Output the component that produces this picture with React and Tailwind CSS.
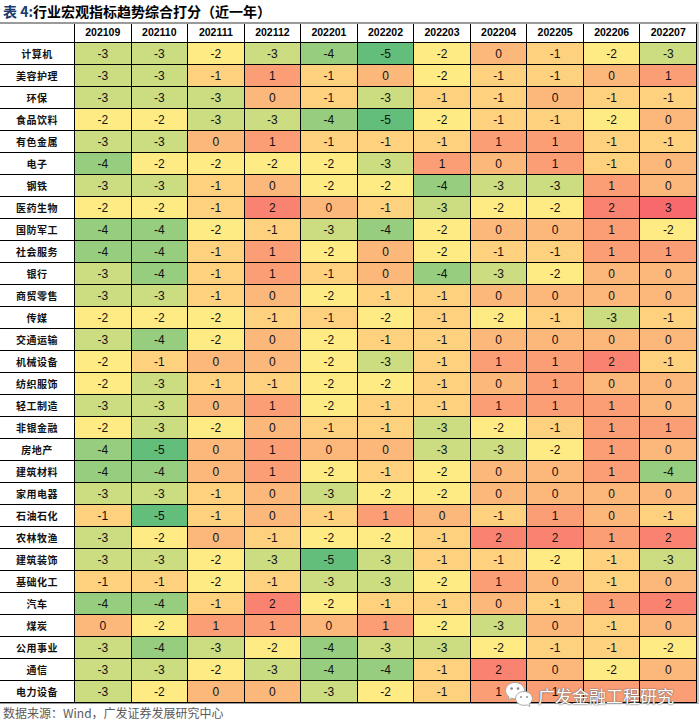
import React from "react";

const months = ["202109","202110","202111","202112","202201","202202","202203","202204","202205","202206","202207"];

const rows = [
  ["计算机", [-3,-3,-2,-3,-4,-5,-2,0,-1,-2,-3]],
  ["美容护理", [-3,-3,-1,1,-1,0,-2,-1,-1,0,1]],
  ["环保", [-3,-3,-3,0,-1,-3,-1,-1,0,-1,-1]],
  ["食品饮料", [-2,-2,-3,-3,-4,-5,-2,-1,-1,-2,0]],
  ["有色金属", [-3,-3,0,1,-1,-1,-1,1,1,-1,-1]],
  ["电子", [-4,-2,-2,-2,-2,-3,1,0,1,-1,0]],
  ["钢铁", [-3,-3,-1,0,-2,-2,-4,-3,-3,1,0]],
  ["医药生物", [-2,-2,-1,2,0,-1,-3,-2,-2,2,3]],
  ["国防军工", [-4,-4,-2,-1,-3,-4,-2,0,0,1,-2]],
  ["社会服务", [-4,-4,-1,1,-2,0,-2,-1,-1,1,1]],
  ["银行", [-3,-4,-1,1,-1,0,-4,-3,-2,0,0]],
  ["商贸零售", [-3,-3,-1,0,-2,-1,-1,0,0,0,0]],
  ["传媒", [-2,-2,-2,-1,-1,-2,-1,-2,-1,-3,-1]],
  ["交通运输", [-3,-4,-2,0,-2,-1,-1,0,0,0,0]],
  ["机械设备", [-2,-1,0,0,-2,-3,-1,1,1,2,-1]],
  ["纺织服饰", [-2,-3,-1,-1,-2,-2,-1,0,1,0,0]],
  ["轻工制造", [-3,-3,0,1,-2,-1,-1,1,1,1,0]],
  ["非银金融", [-2,-3,-2,0,-1,-1,-3,-2,-1,1,1]],
  ["房地产", [-4,-5,0,1,0,0,-3,-3,-2,1,0]],
  ["建筑材料", [-4,-4,0,1,-2,-1,-2,0,0,1,-4]],
  ["家用电器", [-3,-3,-1,0,-3,-2,-2,0,0,0,0]],
  ["石油石化", [-1,-5,-1,0,-1,1,0,-1,1,0,-1]],
  ["农林牧渔", [-3,-2,0,-1,-2,-2,-1,2,2,1,2]],
  ["建筑装饰", [-3,-3,-2,-3,-5,-3,-1,-1,-2,-1,-3]],
  ["基础化工", [-1,-1,-2,-1,-3,-3,-2,1,0,-1,0]],
  ["汽车", [-4,-4,-1,2,-2,-1,-1,0,-1,1,2]],
  ["煤炭", [0,-2,1,1,0,1,-2,-3,0,-1,0]],
  ["公用事业", [-3,-4,-3,-2,-4,-3,-3,-2,-1,-1,-2]],
  ["通信", [-3,-3,-2,-3,-4,-4,-1,2,0,-2,0]],
  ["电力设备", [-3,-2,0,0,-3,-2,-1,1,1,1,1]],
];

const bg = {
  "-5": "bg-[#63BE7B]",
  "-4": "bg-[#97CD7E]",
  "-3": "bg-[#CBDC81]",
  "-2": "bg-[#FFEB84]",
  "-1": "bg-[#FED17F]",
  "0": "bg-[#FCB77A]",
  "1": "bg-[#FB9D75]",
  "2": "bg-[#F98370]",
  "3": "bg-[#F8696B]",
};

const gridCols = "grid grid-cols-[75px_repeat(11,minmax(0,1fr))]";

function WeChatIcon() {
  return (
    <svg width="30" height="27" viewBox="0 0 30 27">
      <g stroke="#a8a8a8" strokeWidth="1" fill="#ffffff">
        <path d="M11 1.5 C5.5 1.5 1.5 5.2 1.5 9.6 C1.5 12.2 2.8 14.3 5 15.8 L4 19 L7.6 17.1 C8.7 17.5 9.8 17.7 11 17.7 C16.5 17.7 20.5 14 20.5 9.6 C20.5 5.2 16.5 1.5 11 1.5 Z" />
        <path d="M20 10.5 C15.3 10.5 11.6 13.6 11.6 17.4 C11.6 21.2 15.3 24.3 20 24.3 C21 24.3 21.9 24.1 22.8 23.8 L26 25.5 L25.2 22.7 C27.1 21.4 28.4 19.5 28.4 17.4 C28.4 13.6 24.7 10.5 20 10.5 Z" />
      </g>
      <circle cx="7.6" cy="7.6" r="1.3" fill="#8a8a8a" />
      <circle cx="14" cy="7.6" r="1.3" fill="#8a8a8a" />
      <circle cx="17" cy="16" r="1.1" fill="#9a9a9a" />
      <circle cx="23" cy="16" r="1.1" fill="#9a9a9a" />
    </svg>
  );
}

export default function App() {
  const lastIdx = rows.length - 1;
  return (
    <div className="relative w-[700px] h-[726px] bg-white overflow-hidden font-['Liberation_Sans','Noto_Sans_CJK_SC',sans-serif]">
      <div className="h-[22px] flex items-center pl-[3px] text-[14px] font-bold font-['Noto_Sans_CJK_SC',sans-serif] leading-none">
        <span className="text-[#1b3a6b]">表 4:</span>
        <span className="text-black">行业宏观指标趋势综合打分（近一年）</span>
      </div>
      <div className="w-[699px] border-t-2 border-t-[#9a9a9a] border-b border-b-[#9a9a9a] border-r-2 border-r-[#c8c8c8]">
        <div className={`${gridCols} h-[19px] border-b border-black bg-white`}>
          <div className="border-r border-black" />
          {months.map((m) => (
            <div key={m} className="border-r border-black flex items-center justify-center text-[10.5px] font-bold text-black font-['Liberation_Sans',sans-serif]">
              {m}
            </div>
          ))}
        </div>
        {rows.map(([name, vals], r) => (
          <div key={name} className={`${gridCols} h-[22px] border-b border-black`}>
            <div className="border-r border-black flex items-center justify-center bg-white text-[10px] font-bold tracking-[0.5px] text-[#111] font-['Noto_Sans_CJK_SC',sans-serif]">
              {name}
            </div>
            {vals.map((v, i) => (
              <div key={i} className={`${bg[String(v)]} border-r border-black flex items-center justify-center text-[12px] text-[#111] font-['Liberation_Sans',sans-serif]`}>
                {r === lastIdx && i >= 9 ? "" : v}
              </div>
            ))}
          </div>
        ))}
      </div>
      <div className="h-[18px] flex items-center pl-[3px] text-[12px] text-[#5a5a5a] font-['Noto_Sans_CJK_SC',sans-serif]">
        数据来源：Wind，广发证券发展研究中心
      </div>
      <div className="absolute left-[504px] top-[681px] flex items-center gap-[4px]">
        <WeChatIcon />
        <span className="text-[17px] leading-none text-white font-['Noto_Sans_CJK_SC',sans-serif] [text-shadow:0_0_1px_#555,0_0_2px_#777] mt-[2px]">
          广发金融工程研究
        </span>
      </div>
    </div>
  );
}
